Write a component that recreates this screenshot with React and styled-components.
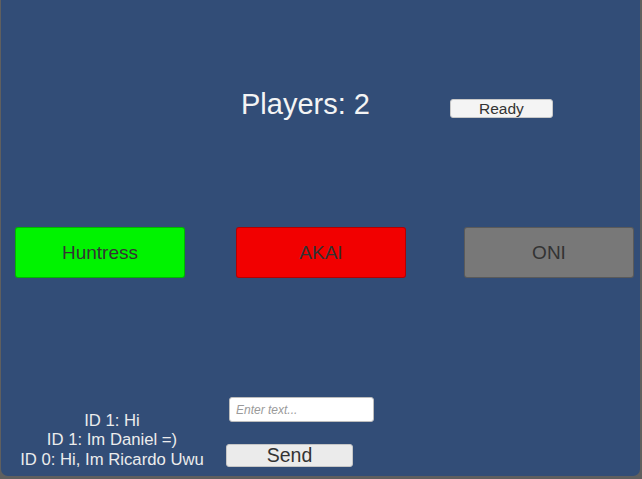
import styled, { createGlobalStyle } from 'styled-components'

const GlobalStyle = createGlobalStyle`
  html, body {
    margin: 0;
    padding: 0;
    background-color: #5f5f5f;
    font-family: "Liberation Sans", Arial, sans-serif;
  }
`

const CHARACTERS = [
  { name: 'Huntress', color: '#00f300', offset: 0 },
  { name: 'AKAI', color: '#f20000', offset: 51 },
  { name: 'ONI', color: '#787878', offset: 58 },
]

const MESSAGES = ['ID 1: Hi', 'ID 1: Im Daniel =)', 'ID 0: Hi, Im Ricardo Uwu']

// ─── Layout ───────────────────────────────────────────────────────────────────

const Screen = styled.div`
  width: 642px;
  height: 479px;
  padding: 0 2px 3px 1px;
  box-sizing: border-box;
  overflow: hidden;
`

const Panel = styled.div`
  height: 100%;
  background-color: #324d77;
  border-radius: 0 0 7px 7px;
  display: flex;
  flex-direction: column;
`

const Header = styled.div`
  display: flex;
  align-items: flex-start;
  padding: 88px 0 0 240px;
  gap: 80px;
`

const Title = styled.h1`
  margin: 0;
  font-weight: 400;
  font-size: 29px;
  line-height: 32px;
  color: #f4f4f4;
`

const ReadyBtn = styled.button`
  margin-top: 11px;
  width: 103px;
  height: 19px;
  padding: 0;
  background-color: #f4f4f4;
  border: 1px solid #c8c8c8;
  border-radius: 3px;
  color: #333;
  font-family: inherit;
  font-size: 15.5px;
  line-height: 17px;
`

const CharacterRow = styled.div`
  display: flex;
  padding: 107px 0 0 14px;
`

const CharacterBtn = styled.button`
  margin-left: ${p => p.$offset}px;
  width: 170px;
  height: 51px;
  padding: 0;
  background-color: ${p => p.$color};
  border: 1px solid rgba(0, 0, 0, 0.25);
  border-radius: 3px;
  color: #333;
  font-family: inherit;
  font-size: 19px;
`

const Footer = styled.div`
  margin-top: auto;
  display: flex;
  align-items: flex-end;
  padding-bottom: 7px;
`

const ChatLog = styled.div`
  width: 222px;
  display: flex;
  flex-direction: column;
  align-items: center;
  color: #ececec;
  font-size: 16.7px;
  line-height: 19.5px;
`

const Composer = styled.div`
  display: flex;
  flex-direction: column;
  align-items: flex-start;
  gap: 22px;
  margin: 0 0 2px 3px;
`

const TextInput = styled.input`
  margin-left: 3px;
  width: 145px;
  height: 25px;
  box-sizing: border-box;
  padding: 0 6px;
  background-color: #fff;
  border: 1px solid #bdbdbd;
  border-radius: 3px;
  font-family: inherit;
  font-size: 12px;
  color: #333;

  &::placeholder {
    color: #9a9a9a;
    font-style: italic;
  }
  &:focus { outline: none; }
`

const SendBtn = styled.button`
  width: 127px;
  height: 23px;
  padding: 0;
  background-color: #ebebeb;
  border: 1px solid #c6c6c6;
  border-radius: 3px;
  color: #333;
  font-family: inherit;
  font-size: 19.5px;
  line-height: 21px;
`

// ─── Component ────────────────────────────────────────────────────────────────

export default function App() {
  return (
    <Screen>
      <GlobalStyle />
      <Panel>
        <Header>
          <Title>Players: 2</Title>
          <ReadyBtn>Ready</ReadyBtn>
        </Header>

        <CharacterRow>
          {CHARACTERS.map(c => (
            <CharacterBtn key={c.name} $color={c.color} $offset={c.offset}>
              {c.name}
            </CharacterBtn>
          ))}
        </CharacterRow>

        <Footer>
          <ChatLog>
            {MESSAGES.map((m, i) => <span key={i}>{m}</span>)}
          </ChatLog>
          <Composer>
            <TextInput type="text" placeholder="Enter text..." />
            <SendBtn>Send</SendBtn>
          </Composer>
        </Footer>
      </Panel>
    </Screen>
  )
}
